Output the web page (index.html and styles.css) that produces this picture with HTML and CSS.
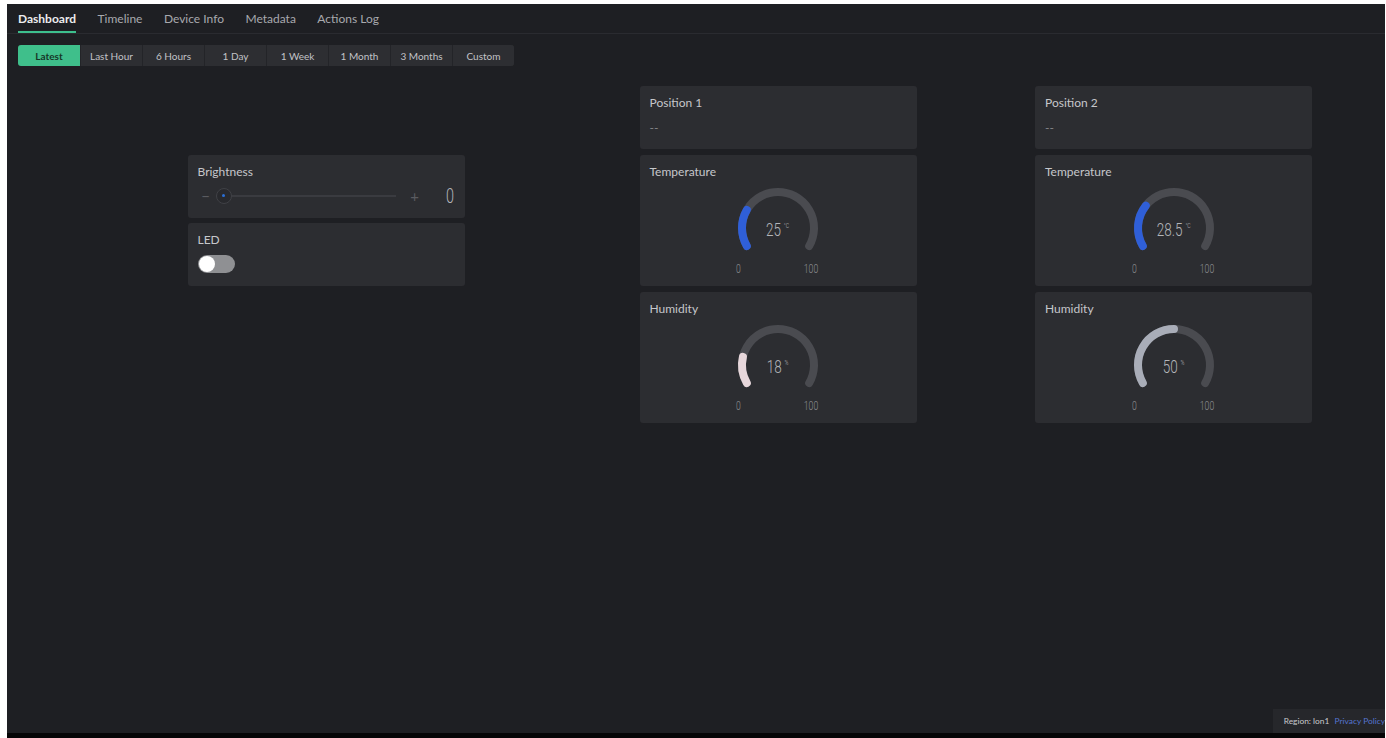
FILE: index.html
```html
<!DOCTYPE html>
<html lang="en">
<head>
<meta charset="utf-8">
<title>Dashboard</title>
<link rel="stylesheet" href="styles.css">
</head>
<body>
<div class="app">
  <nav class="tabs">
    <a class="tab active" href="#">Dashboard</a>
    <a class="tab" href="#">Timeline</a>
    <a class="tab" href="#">Device Info</a>
    <a class="tab" href="#">Metadata</a>
    <a class="tab" href="#">Actions Log</a>
  </nav>

  <div class="range">
    <button class="range-btn active">Latest</button>
    <button class="range-btn">Last Hour</button>
    <button class="range-btn">6 Hours</button>
    <button class="range-btn">1 Day</button>
    <button class="range-btn">1 Week</button>
    <button class="range-btn">1 Month</button>
    <button class="range-btn">3 Months</button>
    <button class="range-btn">Custom</button>
  </div>

  <main class="board">
    <!-- controls -->
    <section class="card col-a row-2">
      <div class="card-title">Brightness</div>
      <div class="slider">
        <span class="step">−</span>
        <div class="track"><span class="thumb"></span></div>
        <span class="step plus">+</span>
        <span class="slider-value"><span class="cond">0</span></span>
      </div>
    </section>
    <section class="card col-a row-3">
      <div class="card-title">LED</div>
      <div class="toggle"></div>
    </section>

    <!-- device 1 -->
    <section class="card col-b row-1">
      <div class="card-title">Position 1</div>
      <div class="empty">--</div>
    </section>
    <section class="card col-b row-2 tall">
      <div class="card-title">Temperature</div>
      <div class="dial">
        <svg viewBox="0 0 100 70" width="100" height="70">
          <path class="arc-track" d="M18.82 62 A36 36 0 1 1 81.18 62"/>
          <path class="arc-fill blue" d="M18.82 62 A36 36 0 0 1 18.82 26"/>
        </svg>
        <div class="reading"><span class="val">25<span class="unit">°C</span></span></div>
      </div>
      <div class="scale"><span class="cond">0</span><span class="cond">100</span></div>
    </section>
    <section class="card col-b row-4 tall">
      <div class="card-title">Humidity</div>
      <div class="dial">
        <svg viewBox="0 0 100 70" width="100" height="70">
          <path class="arc-track" d="M18.82 62 A36 36 0 1 1 81.18 62"/>
          <path class="arc-fill blush" d="M18.82 62 A36 36 0 0 1 14.95 35.78"/>
        </svg>
        <div class="reading"><span class="val">18<span class="unit">%</span></span></div>
      </div>
      <div class="scale"><span class="cond">0</span><span class="cond">100</span></div>
    </section>

    <!-- device 2 -->
    <section class="card col-c row-1">
      <div class="card-title">Position 2</div>
      <div class="empty">--</div>
    </section>
    <section class="card col-c row-2 tall">
      <div class="card-title">Temperature</div>
      <div class="dial">
        <svg viewBox="0 0 100 70" width="100" height="70">
          <path class="arc-track" d="M18.82 62 A36 36 0 1 1 81.18 62"/>
          <path class="arc-fill blue" d="M18.82 62 A36 36 0 0 1 21.79 21.64"/>
        </svg>
        <div class="reading"><span class="val">28.5<span class="unit">°C</span></span></div>
      </div>
      <div class="scale"><span class="cond">0</span><span class="cond">100</span></div>
    </section>
    <section class="card col-c row-4 tall">
      <div class="card-title">Humidity</div>
      <div class="dial">
        <svg viewBox="0 0 100 70" width="100" height="70">
          <path class="arc-track" d="M18.82 62 A36 36 0 1 1 81.18 62"/>
          <path class="arc-fill silver" d="M18.82 62 A36 36 0 0 1 50 8"/>
        </svg>
        <div class="reading"><span class="val">50<span class="unit">%</span></span></div>
      </div>
      <div class="scale"><span class="cond">0</span><span class="cond">100</span></div>
    </section>
  </main>

  <footer class="foot">Region: lon1 <a href="#">Privacy Policy</a></footer>
</div>
</body>
</html>
```

FILE: styles.css
```css
* {
  box-sizing: border-box;
}

html,
body {
  margin: 0;
  background: #ffffff;
}

body {
  font-family: Lato, "Noto Sans", sans-serif;
}

.app {
  position: relative;
  margin: 4px 1px 0 7px;
  height: 734px;
  background: #1e1f23;
  border-bottom: 5px solid #050506;
  overflow: hidden;
}

/* top navigation */
.tabs {
  display: flex;
  gap: 21.5px;
  height: 30px;
  padding-left: 11px;
  border-bottom: 1px solid #2a2b30;
}

.tab {
  line-height: 29px;
  font-size: 12px;
  color: #a8a9ae;
  text-decoration: none;
}

.tab.active {
  color: #ececee;
  font-weight: 700;
  box-shadow: inset 0 -2px 0 #3dbf8d;
}

/* time range selector */
.range {
  display: flex;
  width: 496px;
  height: 21px;
  margin: 11px 0 0 11px;
  border-radius: 3px;
  overflow: hidden;
  background: #2d2e32;
}

.range-btn {
  width: 62px;
  padding: 0;
  border: 0;
  border-left: 1px solid #232428;
  background: #2d2e32;
  color: #c2c3c7;
  font-family: Lato, "Noto Sans", sans-serif;
  font-size: 10px;
}

.range-btn:first-child {
  border-left: 0;
}

.range-btn.active {
  background: #3fbf8b;
  color: #163628;
  font-weight: 700;
}

/* widget grid */
.board {
  display: grid;
  grid-template-columns: repeat(24, 51px);
  grid-auto-rows: 63px;
  gap: 5.5px;
  margin: 20px 0 0 11px;
}

.col-a { grid-column: 4 / span 5; }
.col-b { grid-column: 12 / span 5; }
.col-c { grid-column: 19 / span 5; }
.row-1 { grid-row: 1; }
.row-2 { grid-row: 2; }
.row-3 { grid-row: 3; }
.row-4 { grid-row: 4; }
.tall { grid-row-end: span 2; }

.card {
  padding: 10px;
  border-radius: 3px;
  background: #2c2d31;
}

.card-title {
  font-size: 12px;
  line-height: 14px;
  color: #c6c7cb;
}

.empty {
  margin-top: 10px;
  font-size: 12px;
  line-height: 16px;
  color: #85868a;
}

/* condensed numerals */
.cond {
  display: inline-block;
  font-family: Roboto, sans-serif;
  font-weight: 300;
  transform: scaleX(0.72);
}

/* slider */
.slider {
  display: flex;
  align-items: center;
  height: 20px;
  margin-top: 7px;
}

.step {
  width: 16px;
  text-align: center;
  font-size: 15px;
  color: #5a5b60;
}

.step.plus {
  width: 38px;
}

.track {
  position: relative;
  width: 180px;
  height: 2px;
  margin-left: 2px;
  background: #3a3b40;
}

.thumb {
  position: absolute;
  left: 0;
  top: 50%;
  width: 16px;
  height: 16px;
  margin-top: -8px;
  border-radius: 50%;
  background: #28292d;
  border: 1px solid #404146;
}

.thumb::after {
  content: "";
  position: absolute;
  left: 50%;
  top: 50%;
  width: 3px;
  height: 3px;
  margin: -1.5px 0 0 -1.5px;
  border-radius: 50%;
  background: #2a6fd6;
}

.slider-value {
  flex: 1;
  text-align: right;
  font-size: 20px;
  line-height: 20px;
  color: #b4b5b9;
}

.slider-value .cond {
  transform-origin: right center;
}

/* switch */
.toggle {
  position: relative;
  width: 37px;
  height: 18px;
  margin-top: 8px;
  border-radius: 9px;
  background: #8f9093;
}

.toggle::before {
  content: "";
  position: absolute;
  left: 1px;
  top: 1px;
  width: 16px;
  height: 16px;
  border-radius: 50%;
  background: #ffffff;
}

/* gauges */
.dial {
  position: relative;
  width: 100px;
  height: 70px;
  margin: 5px auto 0;
}

.dial svg {
  display: block;
}

.arc-track,
.arc-fill {
  fill: none;
  stroke-width: 8;
  stroke-linecap: round;
}

.arc-track { stroke: #4a4b50; }
.arc-fill.blue { stroke: #2f5fd8; }
.arc-fill.blush { stroke: #e7d7db; }
.arc-fill.silver { stroke: #a9adb8; }

.reading {
  position: absolute;
  left: 0;
  right: 0;
  top: 36px;
  display: flex;
  justify-content: center;
}

.val {
  display: inline-flex;
  align-items: flex-start;
  font-family: Roboto, sans-serif;
  font-weight: 300;
  font-size: 18px;
  line-height: 20px;
  color: #b4b5b9;
  transform: scaleX(0.75);
}

.unit {
  margin: 2px 0 0 4px;
  font-size: 7px;
  line-height: 8px;
}

.scale {
  display: flex;
  justify-content: space-between;
  width: 86px;
  margin: 9px auto 0;
  font-size: 12px;
  line-height: 12px;
  color: #909195;
}

/* footer badge */
.foot {
  position: absolute;
  right: -6px;
  bottom: 0;
  height: 24px;
  padding: 0 6px 0 11px;
  background: #26272b;
  font-size: 8.4px;
  line-height: 24px;
  color: #c9cacd;
  white-space: nowrap;
}

.foot a {
  margin-left: 3px;
  color: #5574d0;
  text-decoration: none;
}
```
